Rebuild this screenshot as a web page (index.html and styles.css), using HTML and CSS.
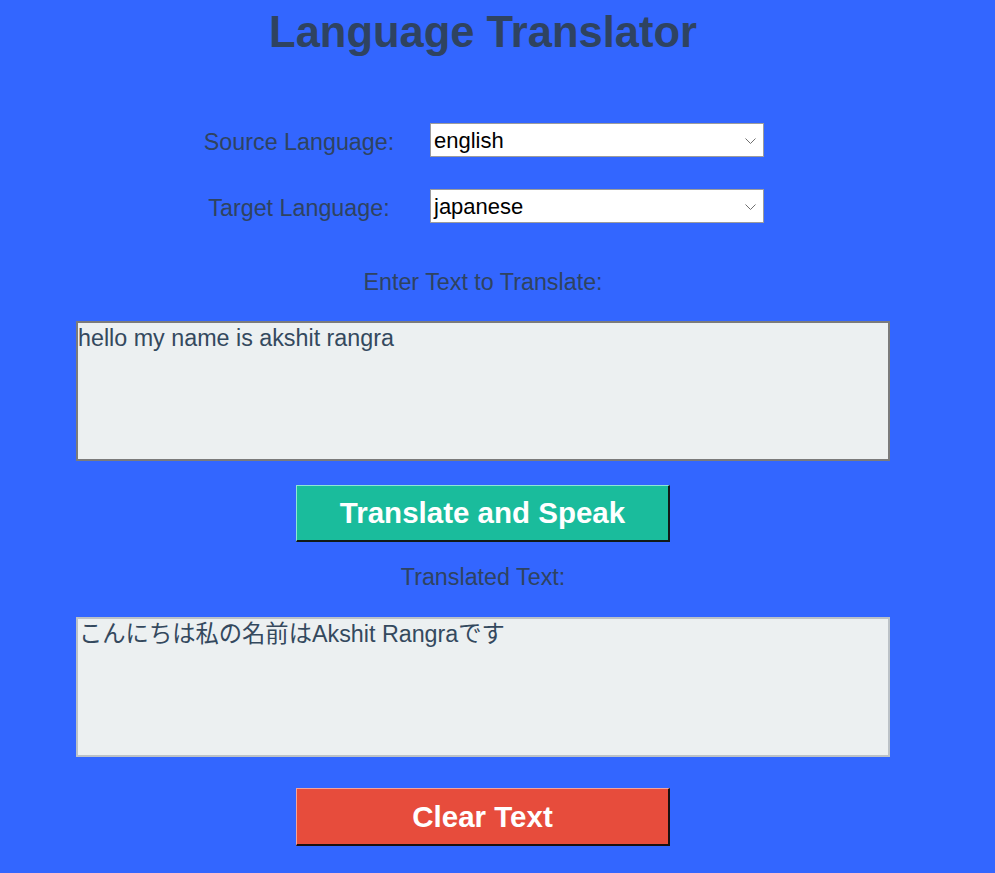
FILE: index.html
```html
<!DOCTYPE html>
<html lang="en">
<head>
<meta charset="utf-8">
<title>Language Translator</title>
<link rel="stylesheet" href="styles.css">
</head>
<body>
<main class="app">
  <h1 class="title">Language Translator</h1>

  <div class="lang-grid">
    <label class="lang-label lang-label-first">Source Language:</label>
    <div class="combo combo-first">
      <span class="combo-value">english</span>
      <svg class="chevron" width="11" height="6" viewBox="0 0 11 6"><path d="M0.5 0.5 L5.5 5.5 L10.5 0.5" fill="none" stroke="#6f6f6f" stroke-width="1"/></svg>
    </div>
    <label class="lang-label lang-label-second">Target Language:</label>
    <div class="combo combo-second">
      <span class="combo-value">japanese</span>
      <svg class="chevron" width="11" height="6" viewBox="0 0 11 6"><path d="M0.5 0.5 L5.5 5.5 L10.5 0.5" fill="none" stroke="#6f6f6f" stroke-width="1"/></svg>
    </div>
  </div>

  <p class="section-label section-label-input">Enter Text to Translate:</p>
  <textarea class="text-box text-box-input" spellcheck="false">hello my name is akshit rangra</textarea>

  <button class="action-btn btn-translate" type="button">Translate and Speak</button>

  <p class="section-label section-label-output">Translated Text:</p>
  <textarea class="text-box text-box-output" readonly spellcheck="false">こんにちは私の名前はAkshit Rangraです</textarea>

  <button class="action-btn btn-clear" type="button">Clear Text</button>
</main>
</body>
</html>
```

FILE: styles.css
```css
html, body {
  margin: 0;
  padding: 0;
  background: #3366ff;
}

body {
  font-family: "Liberation Sans", Arial, "Noto Sans CJK JP", sans-serif;
  color: #2c3e50;
  overflow: hidden;
}

.app {
  width: 966px;
  display: flex;
  flex-direction: column;
  align-items: center;
}

.title {
  margin: 0;
  height: 64px;
  font-size: 43.5px;
  line-height: 64px;
  font-weight: bold;
  color: #2f4360;
}

.lang-grid {
  margin-top: 59px;
  display: grid;
  grid-template-columns: 194px 334px;
  column-gap: 34px;
  row-gap: 30px;
  align-items: start;
}

.lang-label {
  display: block;
  margin-top: 2px;
  font-size: 23.3px;
  line-height: 34px;
  text-align: center;
  color: #2f4360;
  white-space: nowrap;
}

.combo {
  box-sizing: border-box;
  height: 34px;
  background: #ffffff;
  border: 1px solid #9c9c9c;
  display: flex;
  align-items: center;
  justify-content: space-between;
  padding: 1px 7px 0 3px;
}

.combo-value {
  font-size: 22px;
  line-height: 32px;
  color: #000000;
}

.chevron {
  display: block;
  flex: none;
}

.section-label {
  margin: 0;
  font-size: 23.3px;
  line-height: 30px;
  color: #2f4360;
}

.section-label-input {
  margin-top: 42px;
}

.section-label-output {
  margin-top: 20px;
}

.text-box {
  box-sizing: border-box;
  display: block;
  width: 814px;
  height: 140px;
  margin: 24px 0 0;
  padding: 0;
  background: #ecf0f1;
  color: #34495e;
  font-family: "Liberation Sans", Arial, "Noto Sans CJK JP", sans-serif;
  font-size: 23.3px;
  line-height: 30px;
  resize: none;
  overflow: hidden;
  outline: none;
  border-radius: 0;
}

.text-box-input {
  border: 2px solid #7b7b7b;
}

.text-box-output {
  margin-top: 25px;
  border: 2px solid #bcc2c7;
  padding-left: 1px;
}

.action-btn {
  box-sizing: border-box;
  display: block;
  width: 374px;
  height: 57px;
  margin: 24px 0 0;
  padding: 0;
  border-style: solid;
  border-width: 1px 2px 2px 1px;
  font-family: "Liberation Sans", Arial, sans-serif;
  font-size: 29.5px;
  font-weight: bold;
  line-height: 54px;
  color: #ffffff;
  cursor: pointer;
}

.btn-translate {
  background: #1abc9c;
  border-color: #8fe6d4 #111a18 #111a18 #8fe6d4;
}

.btn-clear {
  margin-top: 31px;
  height: 58px;
  background: #e74c3c;
  border-color: #f3a49b #1a1111 #1a1111 #f3a49b;
}
```
